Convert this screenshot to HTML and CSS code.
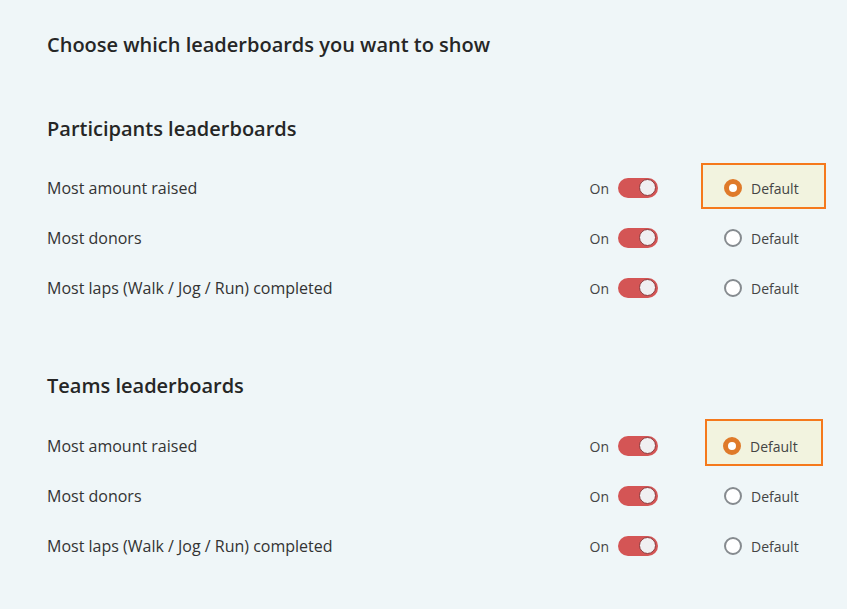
FILE: index.html
```html
<!DOCTYPE html>
<html>
<head>
  <title>Leaderboards</title>
  <link rel="stylesheet" href="styles.css">
</head>
<body>
  <div class="page">
    <h1 class="title">Choose which leaderboards you want to show</h1>

    <section class="group">
      <h2 class="group-title">Participants leaderboards</h2>

      <div class="row">
        <span class="row-label">Most amount raised</span>
        <label class="switch-wrap">On <span class="switch"><span class="knob"></span></span></label>
        <div class="option">
          <label class="choice choice--active choice--wide"><span class="radio radio--on"></span>Default</label>
        </div>
      </div>

      <div class="row">
        <span class="row-label">Most donors</span>
        <label class="switch-wrap">On <span class="switch"><span class="knob"></span></span></label>
        <div class="option">
          <label class="choice"><span class="radio"></span>Default</label>
        </div>
      </div>

      <div class="row">
        <span class="row-label">Most laps (Walk / Jog / Run) completed</span>
        <label class="switch-wrap">On <span class="switch"><span class="knob"></span></span></label>
        <div class="option">
          <label class="choice"><span class="radio"></span>Default</label>
        </div>
      </div>
    </section>

    <section class="group">
      <h2 class="group-title">Teams leaderboards</h2>

      <div class="row">
        <span class="row-label">Most amount raised</span>
        <label class="switch-wrap">On <span class="switch"><span class="knob"></span></span></label>
        <div class="option">
          <label class="choice choice--active choice--narrow"><span class="radio radio--on"></span>Default</label>
        </div>
      </div>

      <div class="row">
        <span class="row-label">Most donors</span>
        <label class="switch-wrap">On <span class="switch"><span class="knob"></span></span></label>
        <div class="option">
          <label class="choice"><span class="radio"></span>Default</label>
        </div>
      </div>

      <div class="row">
        <span class="row-label">Most laps (Walk / Jog / Run) completed</span>
        <label class="switch-wrap">On <span class="switch"><span class="knob"></span></span></label>
        <div class="option">
          <label class="choice"><span class="radio"></span>Default</label>
        </div>
      </div>
    </section>
  </div>
</body>
</html>
```

FILE: styles.css
```css
html, body {
  margin: 0;
  padding: 0;
}

body {
  font-family: "Open Sans", Arial, sans-serif;
  background-color: #eff6f8;
  color: #333;
  min-height: 100vh;
}

.page {
  padding: 32px 21px 0 47px;
}

.title {
  margin: 0;
  font-size: 20px;
  font-weight: 600;
  line-height: 26px;
  color: #262626;
}

.group {
  margin-top: 58px;
}

.group + .group {
  margin-top: 60px;
}

.group-title {
  margin: 0 0 21px;
  font-size: 20px;
  font-weight: 600;
  line-height: 26px;
  color: #262626;
}

.group + .group .group-title {
  margin-bottom: 22px;
}

.row {
  display: flex;
  align-items: center;
  height: 50px;
}

.row-label {
  flex: 1;
  font-size: 16px;
  color: #333;
}

.switch-wrap {
  display: flex;
  align-items: center;
  gap: 9px;
  font-size: 14px;
  color: #444;
}

.switch {
  position: relative;
  display: inline-block;
  width: 40px;
  height: 20px;
  border-radius: 10px;
  background-color: #d45555;
}

.knob {
  position: absolute;
  top: 1px;
  right: 2px;
  width: 15px;
  height: 15px;
  border-radius: 50%;
  background-color: #f0eff1;
  border: 1.5px solid #8c3b3e;
}

.option {
  width: 125px;
  margin-left: 43px;
  display: flex;
  justify-content: flex-start;
}

.choice {
  display: flex;
  align-items: center;
  gap: 9px;
  font-size: 14px;
  color: #444;
  padding-left: 23px;
  height: 46px;
  box-sizing: border-box;
}

.choice--active {
  border: 2px solid #f5791c;
  background-color: #f2f3df;
  padding-left: 21px;
}

.choice--wide {
  width: 125px;
  margin-top: -4px;
  padding-top: 4px;
}

.choice--narrow {
  width: 118px;
  margin-left: 4px;
  padding-left: 16px;
  padding-top: 7px;
  height: 47px;
  margin-top: -7px;
}

.radio {
  width: 18px;
  height: 18px;
  box-sizing: border-box;
  border-radius: 50%;
  border: 2px solid #868b8f;
  background-color: #fff;
}

.radio--on {
  border: 5px solid #df7a2a;
}
```
